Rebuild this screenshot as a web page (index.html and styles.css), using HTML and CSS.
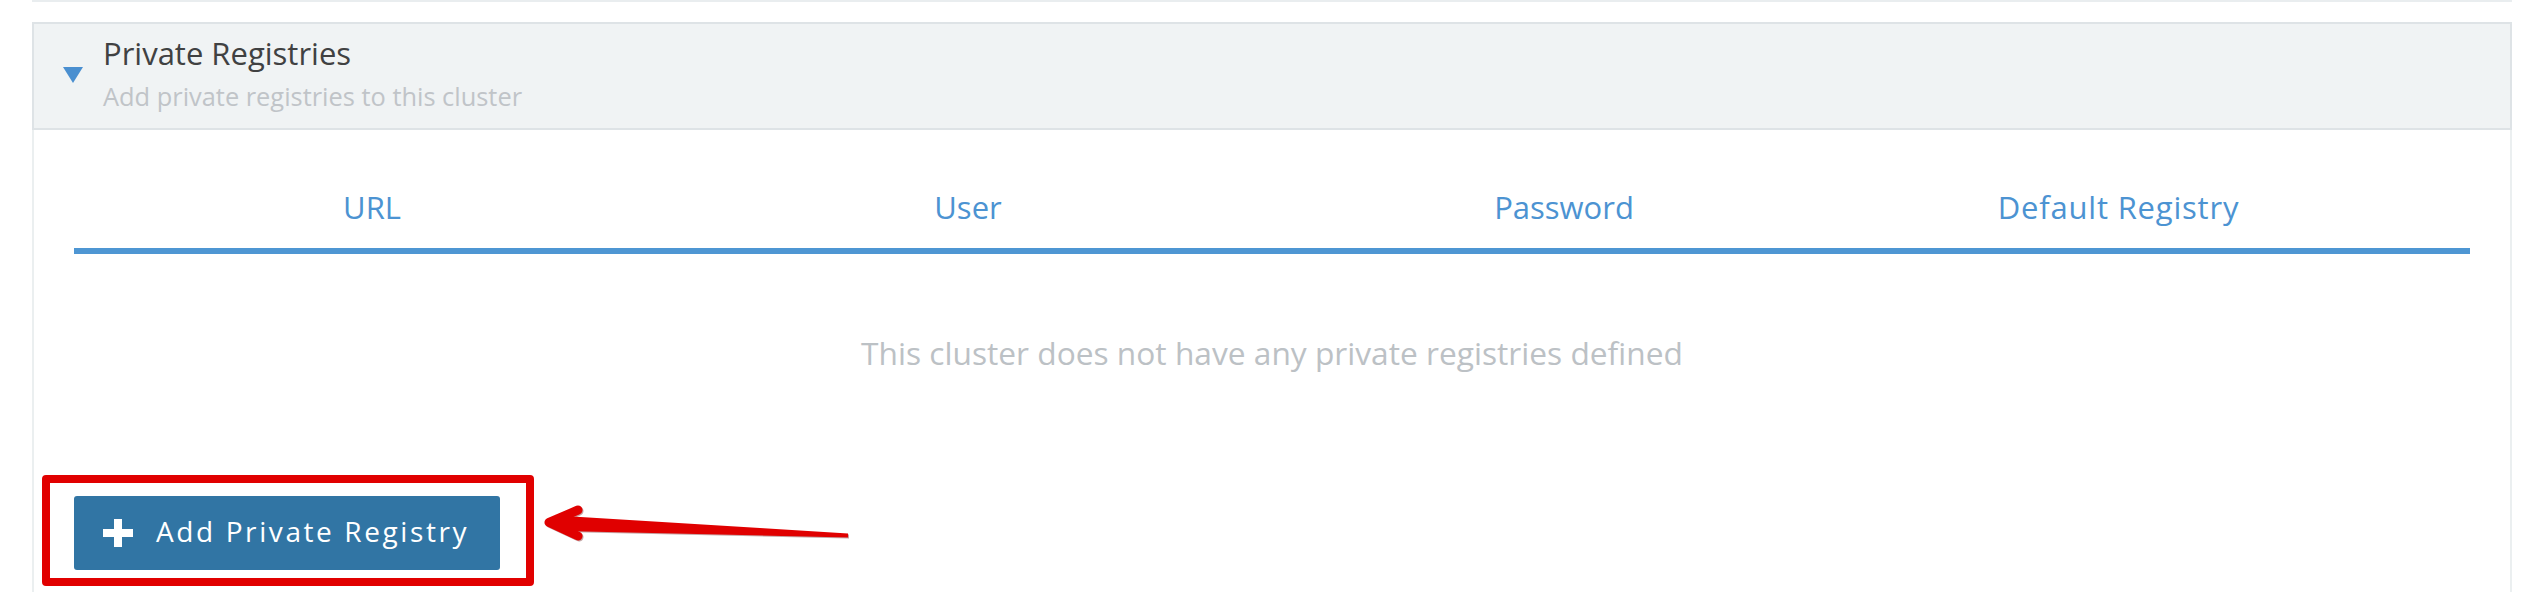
FILE: index.html
```html
<!DOCTYPE html>
<html lang="en">
  <head>
    <meta charset="UTF-8" />
    <meta name="viewport" content="width=device-width, initial-scale=1.0" />
    <title>Private Registries</title>
    <link rel="stylesheet" href="styles.css">
  </head>

  <body>
    <div class="page">
      <div class="prev-panel"></div>

      <section class="accordion">
        <header class="accordion-header">
          <span class="caret"></span>
          <div class="accordion-title">
            <h3>Private Registries</h3>
            <p>Add private registries to this cluster</p>
          </div>
        </header>

        <div class="accordion-body">
          <div class="grid">
            <div class="grid-head">
              <span>URL</span>
              <span>User</span>
              <span>Password</span>
              <span class="wide">Default Registry</span>
              <span></span>
            </div>
            <p class="grid-empty">This cluster does not have any private registries defined</p>
          </div>

          <div class="actions">
            <button class="btn-add" type="button">
              <svg class="icon-plus" width="30" height="28" viewBox="0 0 30 28">
                <rect x="11" y="0" width="8" height="28" fill="#fff" />
                <rect x="0" y="10" width="30" height="8" fill="#fff" />
              </svg>
              <span>Add Private Registry</span>
            </button>
          </div>
        </div>
      </section>

      <!-- annotation -->
      <div class="mark-box"></div>
      <svg class="mark-arrow" width="320" height="46" viewBox="538 500 320 46">
        <polygon points="556,515.5 848,533.5 848,537.5 562,531" fill="#e00000" />
        <polyline points="578,510 549,522.5 578,536" fill="none" stroke="#e00000" stroke-width="9" stroke-linecap="round" stroke-linejoin="round" />
      </svg>
    </div>
  </body>
</html>
```

FILE: styles.css
```css
html {
  box-sizing: border-box;
  font-family: "Open Sans", "Liberation Sans", sans-serif;
  font-size: 16px;
}

*,
*:before,
*:after {
  box-sizing: inherit;
}

body {
  margin: 0;
  background-color: #fff;
}

.page {
  position: relative;
  height: 592px;
  overflow: hidden;
  padding: 0 20px 0 32px;
}

.prev-panel {
  height: 2px;
  background-color: #e9edef;
}

.accordion {
  margin-top: 20px;
}

.accordion-header {
  display: flex;
  align-items: center;
  height: 108px;
  padding: 10px 0 17px 29px;
  background-color: #f0f3f4;
  border: 2px solid #dee3e6;
}

.caret {
  width: 0;
  height: 0;
  margin-top: 5px;
  margin-right: 20px;
  border-left: 10px solid transparent;
  border-right: 10px solid transparent;
  border-top: 16px solid #4a8fd0;
}

.accordion-title h3 {
  margin: 0;
  font-size: 31px;
  font-weight: 400;
  line-height: 38px;
  color: #404142;
}

.accordion-title p {
  margin: 9px 0 0;
  font-size: 25.4px;
  line-height: 30px;
  color: #c0c4c8;
}

.accordion-body {
  height: 470px;
  padding: 58px 40px 0;
  border-left: 2px solid #ebeff0;
  border-right: 2px solid #ebeff0;
}

.grid-head {
  display: grid;
  grid-template-columns: 1fr 1fr 1fr 513px 95px;
  padding-bottom: 22px;
  border-bottom: 6px solid #4e96d3;
  font-size: 31px;
  line-height: 38px;
  color: #4c93d2;
  text-align: center;
}

.grid-head .wide {
  letter-spacing: 0.8px;
}

.grid-empty {
  margin: 80px 0 0;
  font-size: 31.7px;
  line-height: 38px;
  color: #bcc1c5;
  text-align: center;
}

.actions {
  margin-top: 124px;
}

.btn-add {
  display: flex;
  align-items: center;
  gap: 23px;
  width: 426px;
  height: 74px;
  padding: 0 29px 4px;
  border: 0;
  border-radius: 3px;
  background-color: #3175a4;
  color: #fff;
  font-family: inherit;
  font-size: 28px;
  letter-spacing: 2.6px;
  cursor: pointer;
}

.icon-plus {
  flex-shrink: 0;
  margin-top: 4px;
}

.mark-box {
  position: absolute;
  left: 42px;
  top: 475px;
  width: 492px;
  height: 111px;
  border: 8px solid #e10000;
  border-radius: 4px;
}

.mark-arrow {
  position: absolute;
  left: 538px;
  top: 500px;
  filter: drop-shadow(1px 1px 0 rgba(90, 0, 0, 0.35));
}
```
